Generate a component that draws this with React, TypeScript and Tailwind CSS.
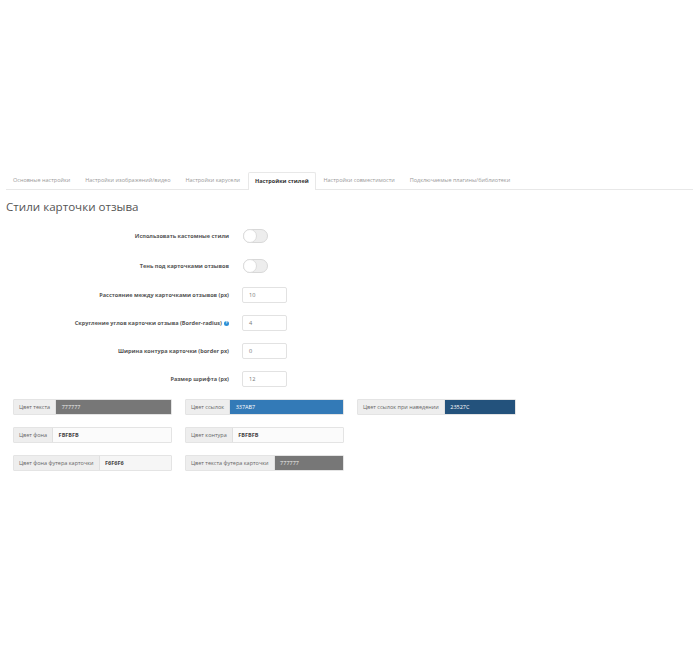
const TABS = [
  { label: "Основные настройки" },
  { label: "Настройки изображений/видео" },
  { label: "Настройки карусели" },
  { label: "Настройки стилей", active: true },
  { label: "Настройки совместимости" },
  { label: "Подключаемые плагины/библиотеки" },
];

function Toggle() {
  return (
    <div className="relative ml-px h-[14px] w-[25px] rounded-full border border-[#d8d8d8] bg-[#ededed]">
      <div className="absolute -left-px -top-px h-[14px] w-[14px] rounded-full border border-[#dcdcdc] bg-white" />
    </div>
  );
}

function Row({ label, children, help }: { label: string; children: React.ReactNode; help?: boolean }) {
  return (
    <div className="flex h-[16px] items-center">
      <div className="flex w-[223px] items-center justify-end gap-[2px] whitespace-nowrap text-[5.55px] font-bold text-[#555]">
        {label}
        {help && (
          <span className="flex h-[5px] w-[5px] items-center justify-center rounded-full bg-[#2b8fd6] text-[4px] leading-none text-white">
            ?
          </span>
        )}
      </div>
      <div className="ml-[13px]">{children}</div>
    </div>
  );
}

function NumberField({ value }: { value: string }) {
  return (
    <div className="flex h-[16px] w-[45px] items-center rounded-[2px] border border-[#e2e2e2] bg-white pl-[6px] text-[5.6px] text-[#777]">
      {value}
    </div>
  );
}

function ColorField({ label, value, bg, fg, bold }: { label: string; value: string; bg: string; fg: string; bold?: boolean }) {
  return (
    <div className="flex h-[16px] w-[159px] overflow-hidden rounded-[1px] border border-[#e4e4e4] text-[5.5px]">
      <div className="flex shrink-0 items-center border-r border-[#e0e0e0] bg-[#eeeeee] px-[5px] text-[#666]">{label}</div>
      <div className={`flex flex-1 items-center pl-[5.5px] ${bg} ${fg} ${bold ? "font-bold" : ""}`}>{value}</div>
    </div>
  );
}

export default function App() {
  return (
    <div className="h-[650px] w-[700px] bg-white pl-[6px] pr-[7px] pt-[172px] font-['Open_Sans',sans-serif] antialiased">
      <div className="flex h-[18px] items-end gap-[0.9px] border-b border-[#e8e8e8]">
        {TABS.map((t) => (
          <div
            key={t.label}
            className={
              t.active
                ? "-mb-px flex h-[18px] items-center rounded-t-[2px] border border-b-0 border-[#e8e8e8] bg-white px-[6px] text-[5.5px] font-bold whitespace-nowrap text-[#333]"
                : "flex h-[17px] shrink-0 items-center px-[7px] text-[5.5px] whitespace-nowrap text-[#999]"
            }
          >
            {t.label}
          </div>
        ))}
      </div>

      <h2 className="mt-[8px] text-[11.6px] leading-[17px] text-[#555]">Стили карточки отзыва</h2>

      <div className="mt-[13px] flex flex-col">
        <div className="flex flex-col gap-[14px]">
          <Row label="Использовать кастомные стили"><Toggle /></Row>
          <Row label="Тень под карточками отзывов"><Toggle /></Row>
        </div>
        <div className="mt-[13px] flex flex-col gap-[12px]">
          <Row label="Расстояние между карточками отзывов (px)"><NumberField value="10" /></Row>
          <Row label="Скругление углов карточки отзыва (Border-radius)" help><NumberField value="4" /></Row>
          <Row label="Ширина контура карточки (border px)"><NumberField value="0" /></Row>
          <Row label="Размер шрифта (px)"><NumberField value="12" /></Row>
        </div>
      </div>

      <div className="mt-[12px] grid grid-cols-[159px_159px_159px] gap-x-[13px] gap-y-[12px] pl-[7px]">
        <ColorField label="Цвет текста" value="777777" bg="bg-[#777777]" fg="text-[#eeeeee]" />
        <ColorField label="Цвет ссылок" value="337AB7" bg="bg-[#337ab7]" fg="text-white" />
        <ColorField label="Цвет ссылок при наведении" value="23527C" bg="bg-[#23527c]" fg="text-white" />
        <ColorField label="Цвет фона" value="FBFBFB" bg="bg-[#fbfbfb]" fg="text-[#444]" bold />
        <ColorField label="Цвет контура" value="FBFBFB" bg="bg-[#fbfbfb]" fg="text-[#444]" bold />
        <div />
        <ColorField label="Цвет фона футера карточки" value="F6F6F6" bg="bg-[#f6f6f6]" fg="text-[#444]" bold />
        <ColorField label="Цвет текста футера карточки" value="777777" bg="bg-[#777777]" fg="text-[#eeeeee]" />
      </div>
    </div>
  );
}
